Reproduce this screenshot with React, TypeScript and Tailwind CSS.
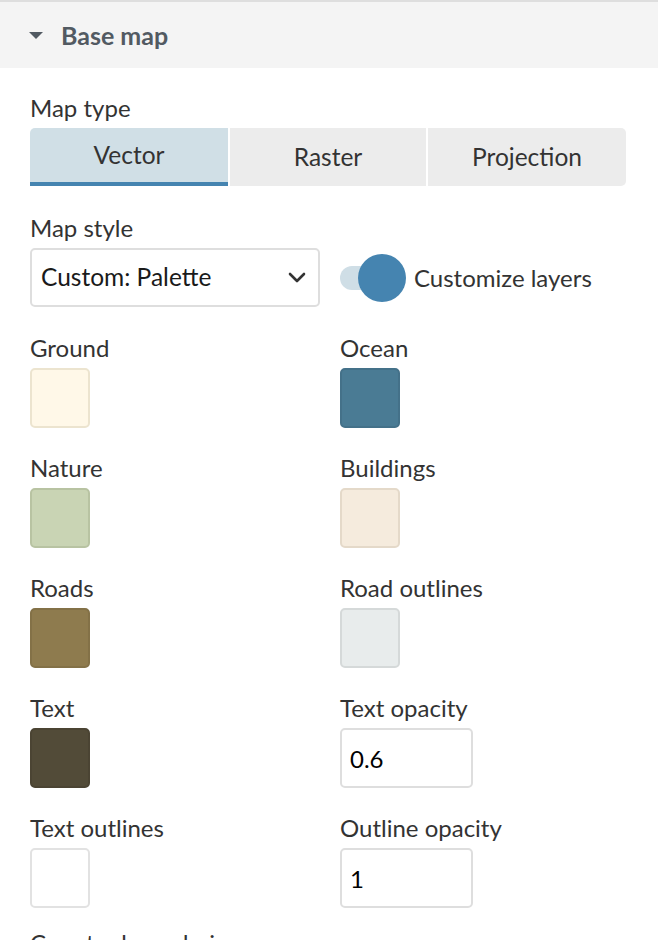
import { useState } from "react";

const swatches: { label: string; color: string; border: string }[][] = [
  [
    { label: "Ground", color: "#fff8e8", border: "#ece4cf" },
    { label: "Ocean", color: "#4a7b94", border: "#447189" },
  ],
  [
    { label: "Nature", color: "#c9d4b4", border: "#b8c3a2" },
    { label: "Buildings", color: "#f5ebdd", border: "#e4d9c9" },
  ],
  [
    { label: "Roads", color: "#8e7b4e", border: "#837147" },
    { label: "Road outlines", color: "#e8ecec", border: "#d5d9d9" },
  ],
];

function Swatch({ color, border }: { color: string; border: string }) {
  return (
    <div
      className="w-[60px] h-[60px] rounded-[5px] border-2"
      style={{ backgroundColor: color, borderColor: border }}
    />
  );
}

function Label({ children }: { children: React.ReactNode }) {
  return (
    <div className="text-[24px] leading-[30px] text-[#333] h-[35px] whitespace-nowrap">
      {children}
    </div>
  );
}

export default function App() {
  const [tab, setTab] = useState("Vector");
  const [custom, setCustom] = useState(true);
  const [textOpacity, setTextOpacity] = useState("0.6");
  const [outlineOpacity, setOutlineOpacity] = useState("1");

  return (
    <div
      className="w-[658px] h-[940px] overflow-hidden bg-white"
      style={{ fontFamily: "Lato, 'Noto Sans', sans-serif" }}>
      {/* header */}
      <div className="border-t-2 border-[#dedede] bg-[#f4f4f4] h-[68px] flex items-center pl-[29px] pt-[2px]">
        <svg width="14" height="8" viewBox="0 0 14 8" className="mr-[18px]">
          <path d="M0 0 L14 0 L7 7 Z" fill="#525a62" />
        </svg>
        <span className="text-[25px] font-bold text-[#525a62]">Base map</span>
      </div>

      <div className="px-[30px] pt-[25px]">
        <Label>Map type</Label>
        <div className="grid grid-cols-[198px_196px_198px] gap-[2px]">
          {["Vector", "Raster", "Projection"].map((t, i) => (
            <button
              key={t}
              onClick={() => setTab(t)}
              className={
                "h-[58px] text-[24.5px] text-[#333] " +
                (tab === t
                  ? "bg-[#d0dfe6] border-b-4 border-[#4584b0] "
                  : "bg-[#ececec] ") +
                (i === 0 ? "rounded-tl-[5px] " : "") +
                (i === 2 ? "rounded-r-[5px]" : "")
              }>
              {t}
            </button>
          ))}
        </div>

        <div className="mt-[27px]">
          <Label>Map style</Label>
          <div className="grid grid-cols-[290px_1fr] gap-x-[20px]">
            <div className="h-[59px] border-2 border-[#dedede] rounded-[5px] flex items-center justify-between pl-[9px] pr-[12px]">
              <span className="text-[24.5px] text-[#1a1a1a]">Custom: Palette</span>
              <svg width="18" height="11" viewBox="0 0 18 11">
                <path
                  d="M2 2 L9 9 L16 2"
                  fill="none"
                  stroke="#333"
                  strokeWidth="2.6"
                  strokeLinecap="round"
                  strokeLinejoin="round"
                />
              </svg>
            </div>
            <div
              className="flex items-center cursor-pointer"
              onClick={() => setCustom(!custom)}>
              <div className="relative w-[66px] h-[48px] flex items-center">
                <div className="w-[36px] h-[24px] rounded-full bg-[#cfdee6]" />
                <div className="absolute left-[18px] top-0 w-[48px] h-[48px] rounded-full bg-[#4584b0]" />
              </div>
              <span className="ml-[8px] text-[24px] text-[#333]">
                Customize layers
              </span>
            </div>
          </div>
        </div>

        <div className="mt-[26px] grid grid-cols-[290px_1fr] gap-x-[20px] gap-y-[25px]">
          {swatches.flat().map((s) => (
            <div key={s.label}>
              <Label>{s.label}</Label>
              <Swatch color={s.color} border={s.border} />
            </div>
          ))}
          <div>
            <Label>Text</Label>
            <Swatch color="#524b38" border="#4b4433" />
          </div>
          <div>
            <Label>Text opacity</Label>
            <input
              value={textOpacity}
              onChange={(e) => setTextOpacity(e.target.value)}
              className="w-[133px] h-[60px] border-2 border-[#dedede] rounded-[5px] pl-[8px] text-[24px] text-black outline-none"
            />
          </div>
          <div>
            <Label>Text outlines</Label>
            <Swatch color="#ffffff" border="#e2e2e2" />
          </div>
          <div>
            <Label>Outline opacity</Label>
            <input
              value={outlineOpacity}
              onChange={(e) => setOutlineOpacity(e.target.value)}
              className="w-[133px] h-[60px] border-2 border-[#dedede] rounded-[5px] pl-[8px] text-[24px] text-black outline-none"
            />
          </div>
          <div className="col-span-2 -mt-[5px]">
            <Label>Country boundaries</Label>
          </div>
        </div>
      </div>
    </div>
  );
}
